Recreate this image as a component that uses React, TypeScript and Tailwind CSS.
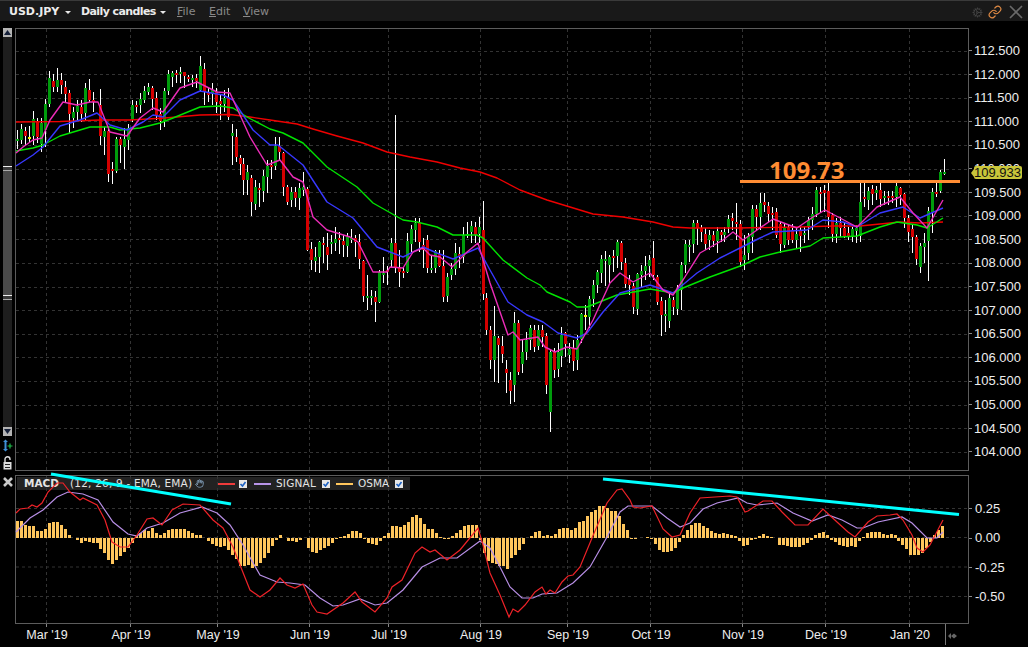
import { Cog, Hand, Link } from "lucide-react";

type Candle = [number, number, number, number, number, string];

// x, wick top, body top, body bottom, wick bottom, colour
const candles: Candle[] = [
  [17,130,139,141,149,"g"],[21,124,129,140,144,"g"],[25,127,131,136,145,"r"],[29,126,137,139,143,"y"],[33,111,119,136,145,"g"],[37,118,121,137,143,"r"],[41,118,123,144,152,"g"],[45,99,104,130,147,"g"],
  [49,71,78,104,107,"g"],[53,74,81,87,92,"r"],[57,68,80,87,92,"g"],[61,73,80,85,94,"r"],[65,81,87,94,103,"r"],[69,90,93,114,133,"r"],[73,107,112,118,128,"g"],[77,100,106,112,120,"g"],
  [81,100,107,114,122,"r"],[85,83,88,113,120,"g"],[89,79,90,100,102,"r"],[93,92,100,102,112,"r"],[100,89,105,136,145,"r"],[104,127,131,137,155,"g"],[108,128,131,174,182,"r"],[112,162,169,171,184,"r"],
  [116,137,139,171,173,"g"],[120,137,139,145,163,"r"],[124,128,139,147,169,"g"],[128,124,128,140,150,"g"],[132,100,105,120,122,"g"],[136,101,105,107,113,"r"],[140,93,99,105,113,"g"],[144,86,91,100,103,"g"],
  [148,83,87,92,95,"g"],[152,86,88,99,110,"r"],[156,92,98,115,120,"r"],[160,108,114,121,130,"r"],[164,88,91,121,127,"g"],[168,70,74,91,95,"g"],[172,71,73,77,87,"g"],[176,70,73,75,83,"r"],
  [180,67,72,74,83,"g"],[184,72,72,76,88,"r"],[188,75,77,79,82,"r"],[192,75,78,80,87,"g"],[196,74,78,81,88,"r"],[200,56,66,90,92,"g"],[204,63,69,92,105,"r"],[208,88,92,95,102,"r"],
  [212,83,90,94,105,"g"],[216,88,92,102,113,"r"],[220,95,101,104,120,"r"],[224,90,98,104,112,"g"],[228,88,97,117,120,"r"],[232,124,133,136,165,"g"],[236,129,137,157,162,"r"],[240,155,158,164,175,"r"],
  [243,158,164,180,195,"r"],[247,165,172,180,195,"g"],[251,175,178,202,216,"r"],[255,180,187,204,210,"g"],[259,183,188,190,207,"r"],[263,170,176,191,202,"g"],[267,160,166,177,193,"g"],[271,160,165,167,179,"r"],
  [275,137,146,166,170,"g"],[279,137,146,152,160,"r"],[283,152,153,187,196,"r"],[287,185,187,202,205,"r"],[291,187,192,200,207,"g"],[295,187,192,198,207,"r"],[299,183,188,198,210,"g"],[303,172,187,190,196,"g"],
  [307,187,189,250,251,"r"],[311,242,249,260,270,"r"],[315,247,257,261,272,"g"],[319,241,242,257,273,"g"],[323,237,243,245,263,"r"],[327,233,247,255,270,"r"],[331,235,242,244,254,"g"],[335,227,239,243,251,"g"],
  [339,232,238,240,254,"r"],[343,235,241,245,257,"r"],[347,233,237,246,257,"g"],[351,229,238,240,243,"g"],[355,235,238,242,257,"r"],[359,234,242,259,269,"r"],[363,260,261,296,302,"r"],[367,275,296,298,310,"g"],
  [371,290,296,298,305,"g"],[375,291,297,302,322,"r"],[379,270,272,302,303,"g"],[383,257,273,275,283,"g"],[387,266,270,272,285,"r"],[391,238,243,260,267,"g"],[395,115,243,268,273,"r"],[399,250,268,272,287,"r"],
  [403,267,271,273,278,"r"],[407,233,241,272,273,"g"],[411,225,229,244,253,"g"],[415,218,223,230,242,"g"],[419,218,223,242,252,"r"],[423,238,245,250,268,"r"],[427,235,240,268,273,"r"],[431,255,268,270,273,"g"],
  [435,250,251,268,273,"g"],[439,250,254,266,267,"r"],[443,250,266,297,302,"r"],[447,273,277,296,302,"g"],[451,263,269,275,280,"g"],[455,243,253,269,275,"g"],[459,247,254,257,268,"r"],[463,227,235,257,263,"g"],
  [467,222,234,236,238,"g"],[471,221,226,232,243,"g"],[475,222,227,235,243,"r"],[479,217,227,234,243,"g"],[483,201,230,294,300,"r"],[486,293,298,330,335,"r"],[490,326,330,360,369,"r"],[494,306,336,360,382,"g"],
  [498,336,338,345,383,"r"],[502,336,346,354,363,"r"],[506,360,369,373,393,"r"],[510,372,380,391,404,"r"],[514,312,323,385,402,"g"],[518,320,323,372,375,"r"],[522,340,352,364,373,"g"],[526,332,340,352,360,"g"],
  [530,325,328,340,350,"g"],[534,325,330,347,352,"r"],[538,325,330,346,350,"g"],[542,325,330,337,347,"r"],[546,333,336,385,394,"r"],[550,350,352,412,432,"g"],[554,348,352,370,378,"r"],[558,343,352,369,377,"g"],
  [561,327,335,356,367,"g"],[565,332,333,344,357,"r"],[569,343,349,355,363,"g"],[573,340,349,361,371,"r"],[577,335,340,360,370,"g"],[581,313,314,339,343,"g"],[585,305,315,317,330,"y"],[589,296,299,317,328,"g"],
  [593,280,285,299,307,"g"],[597,270,272,285,293,"g"],[601,255,259,273,283,"g"],[605,251,259,261,286,"g"],[609,255,257,265,285,"g"],[613,250,256,258,272,"r"],[617,240,242,256,268,"g"],[621,241,243,262,270,"r"],
  [625,258,263,284,288,"r"],[629,275,280,285,295,"r"],[633,283,286,307,314,"r"],[637,273,274,309,315,"g"],[641,265,271,275,287,"g"],[645,256,266,271,280,"g"],[649,255,260,266,277,"g"],[653,241,258,275,280,"r"],
  [657,275,277,302,305,"r"],[661,297,301,315,336,"r"],[665,300,314,316,332,"g"],[669,293,298,321,328,"g"],[673,297,300,307,315,"r"],[677,285,288,309,315,"g"],[681,262,265,290,310,"g"],[685,240,244,265,273,"g"],
  [689,240,245,247,262,"g"],[693,220,223,244,253,"g"],[697,220,223,228,245,"r"],[701,225,228,232,242,"r"],[705,228,234,244,250,"r"],[709,230,235,240,250,"g"],[713,231,235,241,247,"r"],[717,227,231,241,253,"g"],
  [721,230,232,235,242,"r"],[724,227,232,235,242,"g"],[728,215,219,227,233,"g"],[732,213,218,221,230,"r"],[736,203,222,224,240,"r"],[740,220,224,262,267,"r"],[744,235,255,260,270,"g"],[748,233,236,253,260,"g"],
  [752,205,209,237,253,"g"],[756,205,209,217,230,"r"],[760,193,203,217,230,"g"],[764,193,202,205,212,"r"],[768,202,206,214,222,"r"],[772,207,213,215,230,"r"],[776,208,212,235,238,"r"],[780,222,224,244,253,"r"],
  [784,224,228,245,248,"g"],[788,225,228,240,245,"r"],[792,224,230,240,243,"r"],[796,227,234,240,248,"g"],[800,227,230,236,252,"r"],[804,227,233,235,243,"g"],[808,217,220,227,240,"g"],[812,207,214,220,230,"g"],
  [816,187,190,214,217,"g"],[820,187,192,194,212,"r"],[824,185,190,193,212,"r"],[828,183,191,217,228,"r"],[832,213,215,234,242,"r"],[836,218,223,234,243,"g"],[840,217,223,228,237,"r"],[844,223,228,236,238,"r"],
  [848,227,233,236,240,"r"],[852,227,229,236,242,"g"],[856,225,228,231,243,"g"],[860,183,202,236,242,"g"],[864,183,197,199,207,"r"],[868,187,191,200,210,"g"],[872,185,189,194,205,"r"],[876,186,190,193,200,"g"],
  [880,183,190,199,207,"r"],[884,191,196,198,205,"g"],[888,191,196,198,205,"r"],[892,191,196,198,203,"r"],[896,183,186,197,207,"g"],[900,187,188,195,205,"r"],[904,193,194,218,228,"r"],[908,215,218,232,242,"r"],
  [912,225,229,237,253,"r"],[916,235,237,259,265,"r"],[920,243,246,267,273,"g"],[924,233,243,247,263,"g"],[928,207,211,241,281,"g"],[932,188,192,212,233,"g"],[936,183,192,194,197,"r"],[940,170,172,191,193,"g"],
  [944,159,172,174,175,"g"],
];

const candleColor: Record<string, string> = { g: "#009c0c", r: "#d40000", y: "#f4f400" };

const ma200 = "16,122 60,121.5 100,120 130,120 165,118 200,115 230,114.5 250,117 270,120 297,124 313,129 337,136 363,143 387,152 410,157 437,162 460,168 480,172 497,178 520,190 547,200 570,207 593,214 623,217 653,222 673,227 690,228 737,228 800,227 833,226 860,226 880,224 900,222 920,223 943,222";
const ma50 = "16,151 33,148 43,145 60,136 90,127 110,127 120,130 140,128 160,123 173,118 200,107 220,106 233,108 247,117 270,129 283,133 303,143 327,167 357,187 373,203 403,220 417,222 437,227 453,235 477,235 483,238 503,260 527,278 540,285 547,292 570,302 577,307 587,307 617,295 650,289 673,293 683,288 710,277 743,265 760,257 780,252 810,246 823,238 857,236 880,227 897,222 917,225 927,228 943,218";
const ma20 = "16,166 33,155 43,147 60,126 80,120 97,113 110,125 127,130 143,122 153,115 163,117 180,100 200,91 223,95 233,100 253,130 270,145 278,145 303,165 327,202 353,218 377,247 390,252 403,257 423,247 437,253 453,259 478,248 490,270 508,302 527,315 543,322 558,333 577,338 587,333 603,312 620,293 650,285 673,293 697,273 720,258 740,248 760,238 773,232 807,230 823,220 843,222 857,227 880,213 903,207 920,218 943,208";
const ma10 = "16,153 23,147 33,140 42,138 50,120 63,102 77,105 90,102 98,102 110,132 127,136 140,118 153,108 163,112 180,88 197,82 217,92 230,93 250,137 267,165 280,160 293,177 303,182 313,217 327,230 350,237 358,242 373,272 387,272 390,267 403,268 413,252 423,248 430,255 440,257 452,267 467,252 478,243 490,283 508,335 513,332 520,340 538,337 545,347 555,352 567,347 577,349 593,320 610,283 620,273 633,282 650,273 663,290 673,295 683,280 700,253 723,240 733,232 743,240 757,230 773,219 797,228 813,217 825,210 840,218 857,227 877,207 900,197 913,213 927,228 943,200";

const macd = "16,513 20,509 28,508 32,505 37,507 42,503 48,492 57,483 63,483 70,492 80,500 83,498 97,505 105,520 112,542 120,547 128,547 137,535 147,519 153,518 162,525 172,510 183,504 200,505 213,520 223,528 233,547 242,570 250,590 260,597 270,590 280,578 287,585 295,588 303,584 312,605 317,612 327,614 343,603 355,592 362,602 375,612 387,598 392,587 402,580 415,553 422,547 430,552 435,550 447,560 460,550 478,528 483,545 490,573 500,595 509,617 513,609 518,612 525,605 535,592 542,587 546,594 550,590 555,593 562,582 568,576 573,575 580,567 592,538 607,503 617,490 622,489 630,500 633,507 640,508 652,506 663,529 672,537 680,535 690,513 700,498 730,496 737,497 745,512 748,511 763,501 772,501 782,512 795,525 808,525 823,509 837,522 848,532 855,537 868,522 877,516 890,515 897,514 903,520 912,535 917,548 923,552 930,545 943,520";
const signal = "16,532 30,518 43,510 57,497 68,492 83,494 98,500 113,522 128,534 137,536 147,528 163,523 180,513 202,507 217,513 230,525 243,545 260,575 277,582 290,583 305,585 320,598 333,606 343,605 360,599 375,605 387,603 403,590 422,567 440,558 457,558 480,541 490,548 500,567 510,587 522,598 533,598 542,594 557,593 573,583 590,567 607,537 620,512 628,506 652,506 667,518 680,527 690,523 703,509 717,503 738,498 747,503 757,505 777,503 793,513 812,521 828,515 842,520 857,528 863,528 878,522 902,517 912,523 927,538 937,538 943,532";

// histogram heights, in 1/3 px above (+) or below (-) the zero line
const osma = [50,50,40,35,35,22,22,28,45,47,47,40,28,10,0,-5,-14,-10,-13,-15,-15,-33,-45,-65,-77,-65,-55,-42,-30,-15,8,15,25,22,30,15,8,15,25,28,28,28,28,20,14,8,10,0,-10,-18,-25,-28,-25,-35,-50,-62,-85,-85,-80,-90,-85,-75,-60,-45,-25,-5,8,0,-10,-8,-12,-5,0,-30,-42,-45,-35,-30,-25,-15,-3,3,5,12,20,22,15,-3,-15,-18,-20,-8,5,15,35,35,32,40,48,62,68,60,42,28,28,15,2,-4,-3,5,14,25,35,40,40,40,-5,-45,-70,-75,-78,-85,-85,-92,-60,-50,-35,-18,0,5,18,22,6,8,6,12,27,30,30,24,30,48,52,65,78,85,95,95,90,82,80,65,42,25,-2,-2,0,0,2,-3,-18,-35,-42,-42,-40,-30,-12,8,25,40,45,45,35,30,22,15,12,14,12,10,6,-10,-24,-20,-6,-3,5,11,6,2,-1,-20,-21,-24,-26,-26,-26,-22,-15,-6,8,16,18,8,-5,-12,-20,-24,-26,-24,-26,-8,2,14,17,19,17,12,9,11,8,-8,-22,-32,-50,-50,-50,-45,-30,-12,10,25,35];

const months = [
  { x: 46, label: "Mar '19" },
  { x: 130, label: "Apr '19" },
  { x: 217, label: "May '19" },
  { x: 309, label: "Jun '19" },
  { x: 388, label: "Jul '19" },
  { x: 480, label: "Aug '19" },
  { x: 567, label: "Sep '19" },
  { x: 650, label: "Oct '19" },
  { x: 742, label: "Nov '19" },
  { x: 825, label: "Dec '19" },
  { x: 909, label: "Jan '20" },
];

const priceLabels = ["112.500","112.000","111.500","111.000","110.500","110.000","109.500","109.000","108.500","108.000","107.500","107.000","106.500","106.000","105.500","105.000","104.500","104.000"];
const macdLabels = ["0.25", "0.00", "-0.25", "-0.50"];
const priceGrid = priceLabels.map((_, i) => 50.5 + i * 23.6);
const macdGrid = [508.5, 537.5, 567, 596.5];

function VerticalGrid({ y1, y2 }: { y1: number; y2: number }) {
  return (
    <g stroke="#333" strokeDasharray="3 3">
      {months.map((m) => (
        <line key={m.label} x1={m.x + 0.5} x2={m.x + 0.5} y1={y1} y2={y2} />
      ))}
    </g>
  );
}

function PriceChart() {
  return (
    <svg className="block overflow-visible" width={952} height={441} viewBox="16 29 952 441">
      <VerticalGrid y1={29} y2={470} />
      <g stroke="#333" strokeDasharray="3 3">
        {priceGrid.map((y) => (
          <line key={y} x1={16} x2={968} y1={Math.round(y) + 0.5} y2={Math.round(y) + 0.5} />
        ))}
      </g>
      <g shapeRendering="crispEdges">
        {candles.map(([x, hi, top, bot, lo, c]) => (
          <g key={x}>
            <rect x={x} y={hi} width={1} height={lo - hi} fill="#fff" />
            <rect x={x - 1} y={top} width={3} height={bot - top} fill={candleColor[c]} />
          </g>
        ))}
      </g>
      <g fill="none" strokeWidth={1.4} strokeLinejoin="round">
        <polyline points={ma200} stroke="#f00000" />
        <polyline points={ma50} stroke="#00e400" />
        <polyline points={ma20} stroke="#3838ff" />
        <polyline points={ma10} stroke="#ec2cb8" />
      </g>
      <rect x={740} y={180} width={220} height={3} fill="#ff8c33" />
      <text x={769} y={179} fill="#ff8c33" fontSize={24} fontWeight={700} className="font-['Open_Sans',sans-serif]">
        109.73
      </text>
    </svg>
  );
}

function CheckBox() {
  return (
    <svg width={8} height={8} viewBox="0 0 8 8" className="shrink-0">
      <rect width={8} height={8} fill="#e8e8e8" />
      <path d="M1.5 4l2 2 3-4" fill="none" stroke="#1d62c4" strokeWidth={1.6} />
    </svg>
  );
}

function MacdLegend() {
  return (
    <div className="absolute left-[1px] top-[1px] flex h-[13px] w-[393px] items-center bg-[#222] pl-[7px] text-[10.5px] text-[#e4e4e4] font-['DejaVu_Sans',sans-serif]">
      <span className="w-[46px] font-bold">MACD</span>
      <span className="w-[125px] whitespace-nowrap tracking-[0.2px]">(12, 26, 9 - EMA, EMA)</span>
      <span className="w-[23px] shrink-0">
        <Hand size={9} className="text-[#8fb0d0]" />
      </span>
      <span className="mr-[4px] h-[1px] w-[17px] border-t-2 border-[#ef3b3b]" />
      <CheckBox />
      <span className="ml-[7px] mr-[5px] h-[1px] w-[17px] border-t-2 border-[#b894e8]" />
      <span className="w-[46px] tracking-[0.2px]">SIGNAL</span>
      <CheckBox />
      <span className="ml-[6px] mr-[5px] h-[1px] w-[17px] border-t-2 border-[#ffc65c]" />
      <span className="w-[37px]">OSMA</span>
      <CheckBox />
    </div>
  );
}

function MacdChart() {
  return (
    <svg className="relative block overflow-visible" width={952} height={147} viewBox="16 476 952 147">
      <VerticalGrid y1={476} y2={623} />
      <g stroke="#333" strokeDasharray="3 3">
        {macdGrid.map((y) => (
          <line key={y} x1={16} x2={968} y1={y} y2={y} />
        ))}
      </g>
      <g shapeRendering="crispEdges" fill="#ffc65c">
        {osma.map((h, i) => {
          const px = h / 3;
          return <rect key={i} x={Math.round(15.7 + i * 3.99)} y={px > 0 ? 538 - px : 538} width={3} height={Math.abs(px)} />;
        })}
      </g>
      <polyline points={signal} fill="none" stroke="#b88fe6" strokeWidth={1.2} />
      <polyline points={macd} fill="none" stroke="#ee2228" strokeWidth={1.2} />
      <line x1={51} y1={474} x2={231} y2={504} stroke="#00ffff" strokeWidth={3} />
      <line x1={603} y1={479} x2={959} y2={514.5} stroke="#00ffff" strokeWidth={3} />
    </svg>
  );
}

function ScrollButton({ down }: { down?: boolean }) {
  return (
    <div className="flex h-[9px] w-[9px] items-center justify-center bg-[#b4b4b4]">
      <svg width={7} height={5} viewBox="0 0 7 5">
        <path d={down ? "M0 0h7L3.5 5z" : "M0 5h7L3.5 0z"} fill="#16213a" />
      </svg>
    </div>
  );
}

function ThumbGrip() {
  return (
    <div className="flex h-[5px] flex-col justify-between bg-[#3a3a3a]">
      <div className="h-px bg-[#eee]" />
      <div className="h-px bg-[#aaa]" />
    </div>
  );
}

function SideRail() {
  return (
    <div className="flex h-full w-[15px] flex-col pl-[3px] pr-[3px]">
      <ScrollButton />
      <div className="h-[129px] bg-[#1e1e1e]" />
      <div className="flex h-[134px] flex-col justify-between bg-[#4a4a4a]">
        <ThumbGrip />
        <ThumbGrip />
      </div>
      <div className="h-[127px] bg-[#1e1e1e]" />
      <ScrollButton down />
      <svg className="mt-[3px] shrink-0" width={10} height={13} viewBox="0 0 10 13">
        <path d="M2.5 0.5L5 3H3.5v7H5L2.5 12.5 0 10h1.5V3H0z" fill="#3f8fd6" />
        <path d="M7 4.5v5M4.5 7h5" stroke="#1fbf4a" strokeWidth={1.2} />
      </svg>
      <svg className="mt-[4px] shrink-0" width={9} height={14} viewBox="0 0 9 14">
        <path d="M2 6V3.2a2.5 2.5 0 0 1 5 0V4" fill="none" stroke="#ddd" strokeWidth={1.4} />
        <rect x={0.5} y={6} width={8} height={7.5} fill="#ddd" />
        <rect x={2} y={8} width={5} height={1} fill="#222" />
        <rect x={2} y={11} width={5} height={1} fill="#222" />
      </svg>
    </div>
  );
}

function HeaderCaret() {
  return (
    <svg width={6} height={3} viewBox="0 0 6 3" className="shrink-0">
      <path d="M0 0h6L3 3z" fill="#e8e8e8" />
    </svg>
  );
}

function MenuItem({ letter, rest, width }: { letter: string; rest: string; width: string }) {
  return (
    <span className={`${width} font-normal text-[#8a8a8a]`}>
      <span className="underline">{letter}</span>
      {rest}
    </span>
  );
}

function Header() {
  return (
    <div className="flex h-[21px] items-center border-t border-[#3a3a3a] bg-[#191919] pl-[9px] pt-[2px] text-[11px] font-bold text-[#ececec] font-['DejaVu_Sans',sans-serif]">
      <span className="w-[56px]">USD.JPY</span>
      <HeaderCaret />
      <span className="ml-[10px] w-[79px] whitespace-nowrap tracking-[-0.6px]">Daily candles</span>
      <HeaderCaret />
      <div className="ml-[11px] flex">
        <MenuItem letter="F" rest="ile" width="w-[32px]" />
        <MenuItem letter="E" rest="dit" width="w-[34px]" />
        <MenuItem letter="V" rest="iew" width="w-[30px]" />
      </div>
      <div className="ml-auto flex items-center pr-[5px]">
        <Cog size={11} className="text-[#444]" />
        <Link size={14} className="ml-[5px] text-[#e08a44]" />
        <svg className="ml-[7px]" width={14} height={14} viewBox="0 0 14 14">
          <path d="M1 1l12 12M13 1L1 13" stroke="#6a6a6a" strokeWidth={1.6} />
        </svg>
      </div>
    </div>
  );
}

function PriceAxis() {
  return (
    <div className="relative h-full flex-1 pt-[11px] text-[13px] text-[#eee] font-['Liberation_Sans',sans-serif]">
      {priceLabels.map((p) => (
        <div key={p} className="flex h-[23.6px] items-center">
          <span className="mr-[2px] h-px w-[3px] bg-[#888]" />
          <span>{p}</span>
        </div>
      ))}
      <div className="absolute left-[2px] top-[138px] flex h-[13px] items-center">
        <span className="h-0 w-0 border-y-[4px] border-r-[3px] border-y-transparent border-r-[#c9c63a]" />
        <span className="flex h-[13px] w-[48px] items-center rounded-[2px] bg-[#c9c63a] text-[#111]">109.933</span>
      </div>
    </div>
  );
}

function MacdAxis() {
  return (
    <div className="h-full flex-1 pt-[19px] text-[13px] text-[#eee] font-['Liberation_Sans',sans-serif]">
      {macdLabels.map((p) => (
        <div key={p} className="flex h-[29.4px] items-center">
          <span className="mr-[3px] h-px w-[3px] bg-[#888]" />
          <span>{p}</span>
        </div>
      ))}
    </div>
  );
}

function TimeAxis() {
  return (
    <svg className="block" width={1028} height={24} viewBox="0 624 1028 24">
      <g stroke="#888">
        {months.map((m) => (
          <line key={m.label} x1={m.x + 0.5} x2={m.x + 0.5} y1={624} y2={627} />
        ))}
      </g>
      <g fill="#eee" fontSize={12.5} textAnchor="middle" className="font-['Liberation_Sans',sans-serif]">
        {months.map((m) => (
          <text key={m.label} x={m.x + 1} y={639}>
            {m.label}
          </text>
        ))}
      </g>
      <line x1={945.5} x2={945.5} y1={624} y2={645} stroke="#777" />
      <path d="M948 636l3-3v6zM951 636l3-2.5 3 2.5-3 2.5z" fill="#666" />
    </svg>
  );
}

export default function App() {
  return (
    <div className="h-[647px] w-[1028px] overflow-hidden bg-black">
      <Header />
      <div className="pt-[7px]">
        <div className="flex h-[443px]">
          <SideRail />
          <div className="h-full w-[954px] border border-[#5c5c5c]">
            <PriceChart />
          </div>
          <PriceAxis />
        </div>
        <div className="mt-1 flex h-[149px]">
          <div className="w-[15px] pl-[3px] pt-[2px]">
            <svg width={10} height={10} viewBox="0 0 10 10">
              <path d="M1 1l8 8M9 1l-8 8" stroke="#c8c8c8" strokeWidth={2.6} />
            </svg>
          </div>
          <div className="relative h-full w-[954px] border border-[#5c5c5c]">
            <MacdLegend />
            <MacdChart />
          </div>
          <MacdAxis />
        </div>
        <TimeAxis />
      </div>
    </div>
  );
}
